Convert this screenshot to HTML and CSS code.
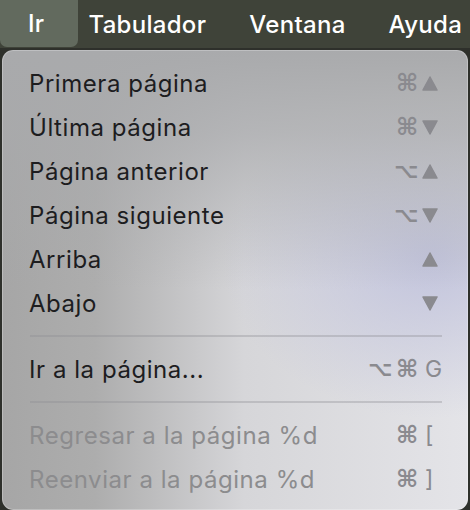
FILE: index.html
```html
<html>
    <head>
        <title>Ir</title>
        <meta charset="UTF-8">
        <link rel="stylesheet" href="styles.css">
    </head>
    <body>
        <div class="menubar">
            <span class="title active">Ir</span>
            <span class="title">Tabulador</span>
            <span class="title">Ventana</span>
            <span class="title">Ayuda</span>
        </div>
        <div class="menu">
            <div class="item">
                <span class="label">Primera página</span>
                <span class="mod cmd">⌘</span>
                <span class="key"><svg class="tri" viewBox="0 0 16 16"><path d="M8 1.5 L15 14.5 H1 Z"/></svg></span>
            </div>
            <div class="item">
                <span class="label">Última página</span>
                <span class="mod cmd">⌘</span>
                <span class="key"><svg class="tri" viewBox="0 0 16 16"><path d="M8 14.5 L15 1.5 H1 Z"/></svg></span>
            </div>
            <div class="item">
                <span class="label">Página anterior</span>
                <span class="mod opt">⌥</span>
                <span class="key"><svg class="tri" viewBox="0 0 16 16"><path d="M8 1.5 L15 14.5 H1 Z"/></svg></span>
            </div>
            <div class="item">
                <span class="label">Página siguiente</span>
                <span class="mod opt">⌥</span>
                <span class="key"><svg class="tri" viewBox="0 0 16 16"><path d="M8 14.5 L15 1.5 H1 Z"/></svg></span>
            </div>
            <div class="item">
                <span class="label">Arriba</span>
                <span class="key"><svg class="tri" viewBox="0 0 16 16"><path d="M8 1.5 L15 14.5 H1 Z"/></svg></span>
            </div>
            <div class="item">
                <span class="label">Abajo</span>
                <span class="key"><svg class="tri" viewBox="0 0 16 16"><path d="M8 14.5 L15 1.5 H1 Z"/></svg></span>
            </div>
            <div class="separator"></div>
            <div class="item">
                <span class="label">Ir a la página...</span>
                <span class="mod opt">⌥</span>
                <span class="mod cmd">⌘</span>
                <span class="key letter">G</span>
            </div>
            <div class="separator"></div>
            <div class="item disabled">
                <span class="label">Regresar a la página %d</span>
                <span class="mod cmd">⌘</span>
                <span class="key letter">[</span>
            </div>
            <div class="item disabled">
                <span class="label">Reenviar a la página %d</span>
                <span class="mod cmd">⌘</span>
                <span class="key letter">]</span>
            </div>
        </div>
    </body>
</html>
```

FILE: styles.css
```css
body {
    margin: 0;
    width: 470px;
    height: 510px;
    overflow: hidden;
    background: #2e302b;
    font-family: Inter, "Noto Sans", sans-serif;
}

.menubar {
    height: 48px;
    display: flex;
    align-items: center;
    background: #3f4339;
    color: #ffffff;
    font-size: 24px;
    font-weight: 500;
    letter-spacing: 0.3px;
}

.title {
    margin-right: 43px;
    white-space: nowrap;
}

.title.active {
    height: 47px;
    line-height: 47px;
    align-self: flex-start;
    padding: 0 34px 0 28px;
    margin-right: 10px;
    background: #626a5e;
    border-radius: 0 0 7px 7px;
}

.menu {
    margin: 2px 2px 0 2px;
    height: 446px;
    padding: 11px 0 3px 0;
    border-radius: 11px;
    box-shadow: inset 0 0 0 1px rgba(255, 255, 255, 0.25);
    background:
        linear-gradient(to bottom, #a9aaac 0%, rgba(169, 170, 172, 0.75) 18%, rgba(169, 170, 172, 0) 52%),
        radial-gradient(ellipse 45% 35% at 92% 45%, rgba(192, 194, 220, 0.95), rgba(192, 194, 220, 0)),
        linear-gradient(to right, #a6a6a6 0%, #adadad 20%, #d6d6d9 52%, #e4e4e8 100%);
}

.item {
    height: 44px;
    display: flex;
    align-items: center;
    padding: 0 24px 0 27px;
    font-size: 24px;
    letter-spacing: 0.55px;
    color: #1d1d1f;
}

.item.disabled {
    color: #8c8c8e;
}

.label {
    flex: 1;
    white-space: nowrap;
}

.mod {
    font-family: "DejaVu Sans", sans-serif;
    font-weight: bold;
    color: #8a8a8f;
    letter-spacing: 0;
    text-align: center;
    line-height: 1;
}

.mod.cmd {
    font-size: 24px;
    width: 20px;
    margin-right: 6px;
}

.mod.opt {
    font-size: 21px;
    width: 22px;
    margin-right: 6px;
}

.key {
    width: 22px;
    display: flex;
    justify-content: flex-start;
    color: #8a8a8f;
}

.key.letter {
    font-size: 23px;
    letter-spacing: 0;
    padding-left: 3px;
    width: 19px;
}

.tri {
    width: 16px;
    height: 17px;
    fill: #8a8a8f;
    stroke: #8a8a8f;
    stroke-width: 1.5;
    stroke-linejoin: round;
}

.separator {
    height: 2px;
    margin: 10px 26px 10px 28px;
    background: rgba(140, 140, 145, 0.35);
}
```
